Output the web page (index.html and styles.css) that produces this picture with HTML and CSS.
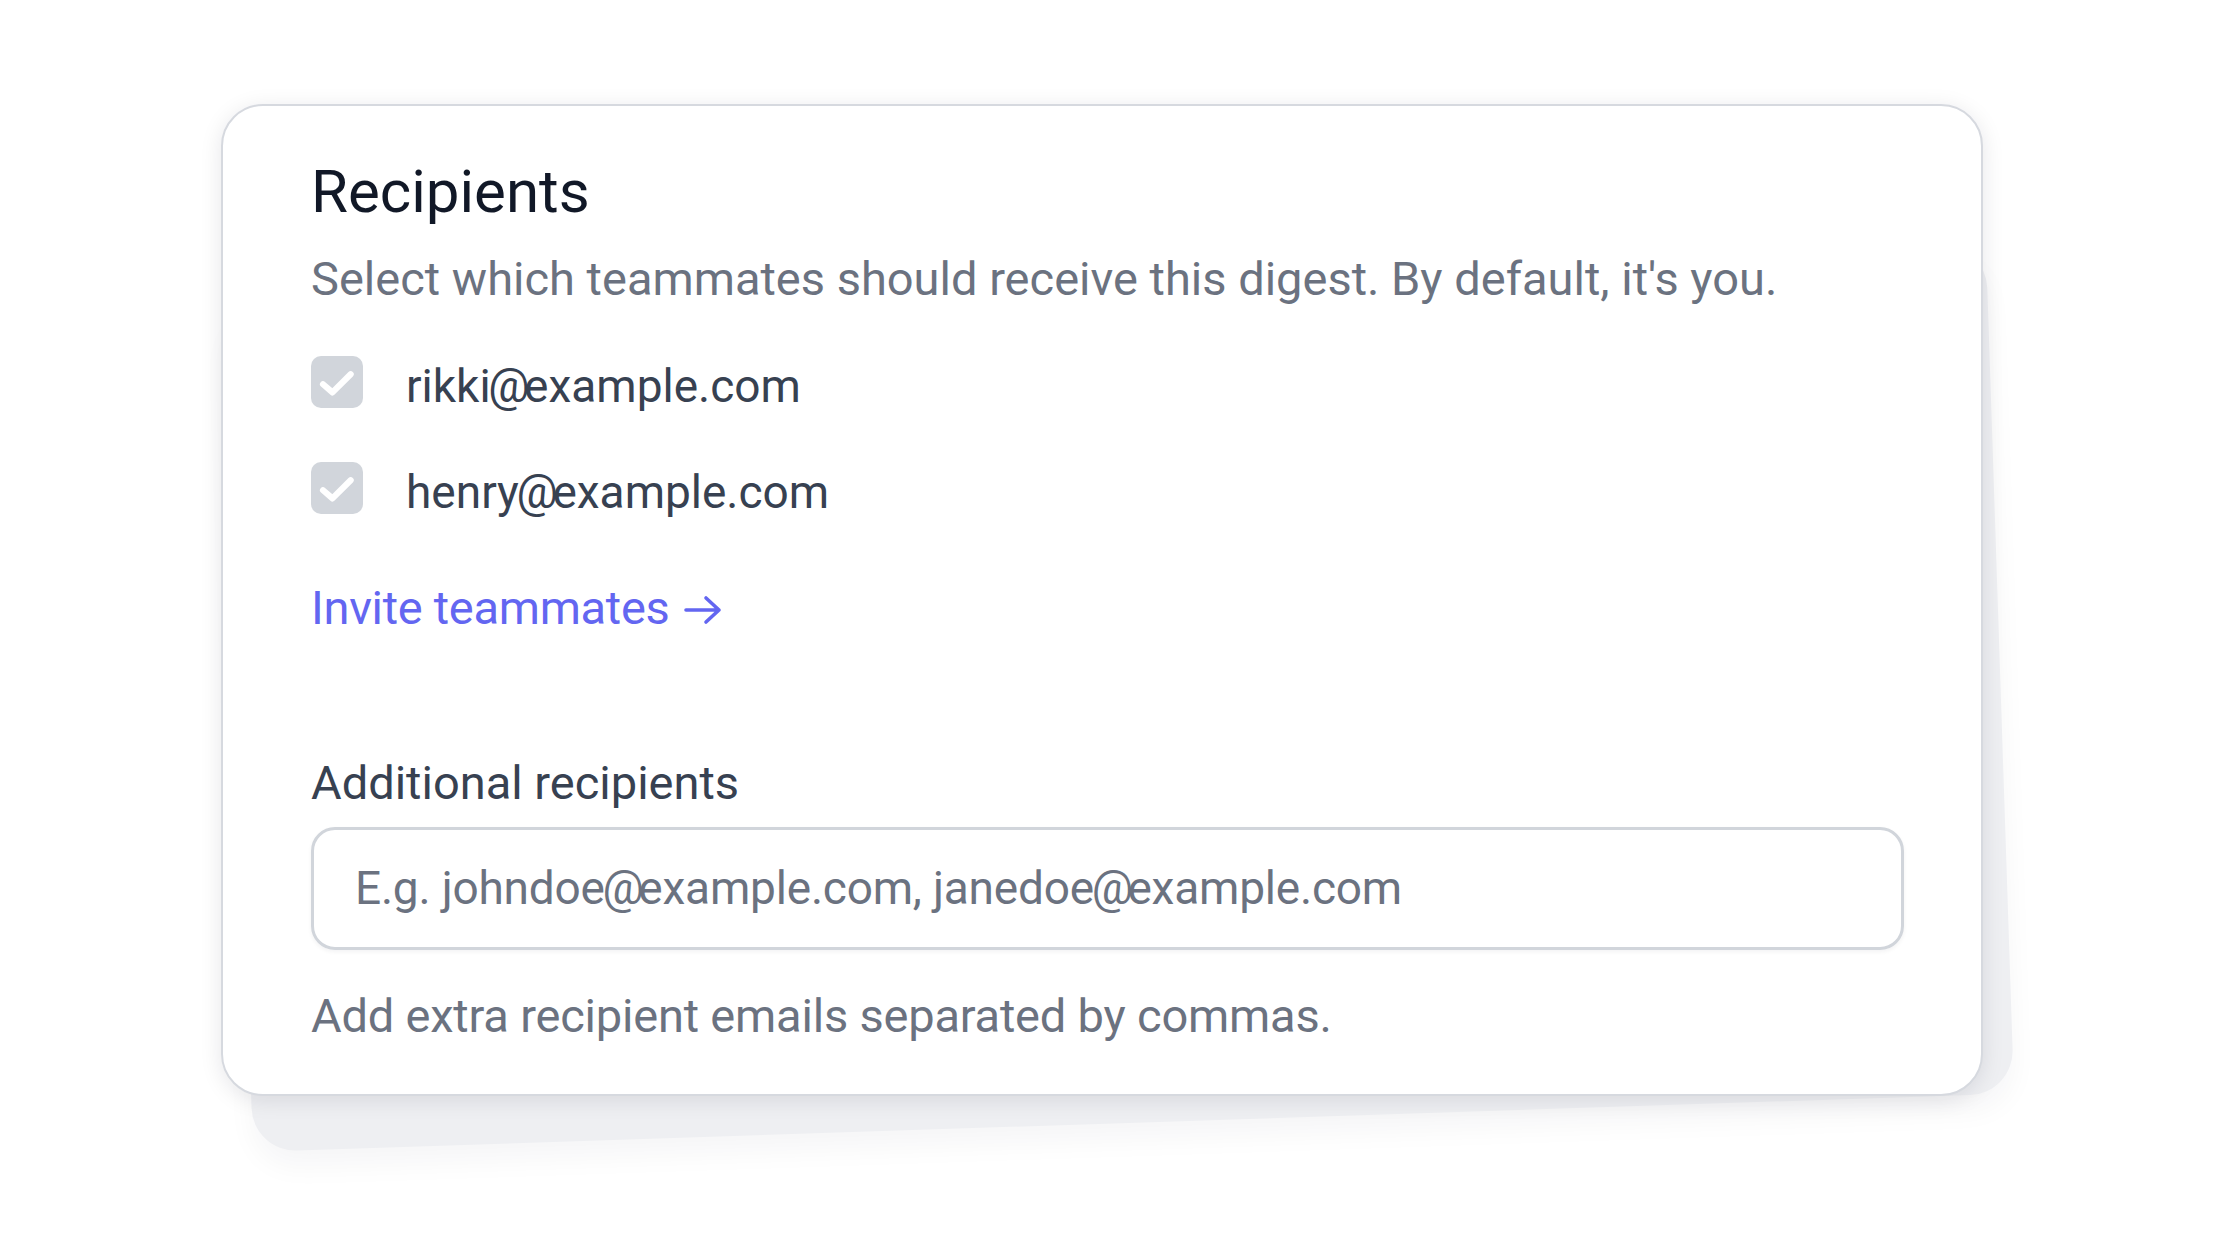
FILE: index.html
```html
<!DOCTYPE html>
<html lang="en">
<head>
<meta charset="utf-8">
<title>Recipients</title>
<link rel="stylesheet" href="styles.css">
</head>
<body>
<main class="stage">
  <div class="card-wrap">
    <div class="back-card" aria-hidden="true"></div>
    <section class="card">
      <h2 class="title">Recipients</h2>
      <p class="subtitle">Select which teammates should receive this digest. By default, it's you.</p>
      <ul class="list">
        <li class="row">
          <span class="check"><svg viewBox="0 0 16 16" width="52" height="52"><path d="M3.7 8.7l2.9 2.5 5.6-5.6" fill="none" stroke="#fff" stroke-width="1.9" stroke-linecap="round" stroke-linejoin="round"/></svg></span>
          <span class="email">rikki<span class="at">@</span>example.com</span>
        </li>
        <li class="row">
          <span class="check"><svg viewBox="0 0 16 16" width="52" height="52"><path d="M3.7 8.7l2.9 2.5 5.6-5.6" fill="none" stroke="#fff" stroke-width="1.9" stroke-linecap="round" stroke-linejoin="round"/></svg></span>
          <span class="email">henry<span class="at">@</span>example.com</span>
        </li>
      </ul>
      <a class="invite" href="#">Invite teammates<svg class="arrow" viewBox="0 0 38 30" width="38" height="30"><path d="M2 15h33M22 3l13 12-13 12" fill="none" stroke="#6366f1" stroke-width="3.6" stroke-linecap="round" stroke-linejoin="round"/></svg></a>
      <label class="label" for="extra">Additional recipients</label>
      <div class="input"><span class="placeholder">E.g. johndoe<span class="at">@</span>example.com, janedoe<span class="at">@</span>example.com</span></div>
      <p class="help">Add extra recipient emails separated by commas.</p>
    </section>
  </div>
</main>
</body>
</html>
```

FILE: styles.css
```css
html, body {
  margin: 0;
  padding: 0;
  background: #ffffff;
}

body {
  font-family: Roboto, "Liberation Sans", sans-serif;
  color: #374151;
  min-height: 1260px;
}

.stage {
  padding: 104px 0 0 221px;
}

.card-wrap {
  position: relative;
  width: 1762px;
}

.back-card {
  position: absolute;
  left: 32px;
  top: 198px;
  width: 1762px;
  height: 850px;
  border-radius: 44px;
  background: #eeeff2;
  transform-origin: 0 100%;
  transform: rotate(-1.9deg);
  box-shadow: 0 16px 28px rgba(17, 24, 39, 0.04);
}

.card {
  position: relative;
  z-index: 1;
  box-sizing: border-box;
  background: #ffffff;
  border: 2px solid #d6d9df;
  border-radius: 42px;
  padding: 56px 77px 55px 88px;
  box-shadow: 0 4px 22px rgba(17, 24, 39, 0.1);
}

.title {
  margin: 0;
  font-size: 60px;
  line-height: 60px;
  font-weight: 400;
  color: #111827;
}

.subtitle {
  margin: 33px 0 0;
  font-size: 47px;
  line-height: 47px;
  color: #6b7280;
}

.list {
  list-style: none;
  margin: 54px 0 0;
  padding: 0;
  display: flex;
  flex-direction: column;
  gap: 54px;
}

.row {
  display: flex;
  align-items: center;
  gap: 43px;
  height: 52px;
}

.check {
  width: 52px;
  height: 52px;
  border-radius: 10px;
  background: #d1d5db;
  display: flex;
  flex: none;
}

.email {
  font-size: 46px;
  line-height: 47px;
  color: #374151;
  margin-top: 8px;
}

.at {
  margin-left: -0.05em;
  letter-spacing: -0.12em;
}

.invite {
  display: flex;
  align-items: center;
  gap: 14px;
  margin-top: 70px;
  font-size: 47px;
  line-height: 47px;
  color: #6366f1;
  text-decoration: none;
  letter-spacing: -0.3px;
}

.arrow {
  flex: none;
  margin-top: 4px;
}

.label {
  display: block;
  margin-top: 128px;
  font-size: 47px;
  line-height: 47px;
  color: #374151;
}

.input {
  box-sizing: border-box;
  margin-top: 21px;
  height: 123px;
  border: 3px solid #d1d5db;
  border-radius: 24px;
  display: flex;
  align-items: center;
  padding-left: 41px;
  box-shadow: 0 2px 4px rgba(17, 24, 39, 0.05);
}

.placeholder {
  font-size: 46px;
  line-height: 47px;
  color: #6b7280;
  letter-spacing: -0.2px;
}

.help {
  margin: 42px 0 0;
  font-size: 47px;
  line-height: 47px;
  color: #6b7280;
  letter-spacing: -0.2px;
}
```
